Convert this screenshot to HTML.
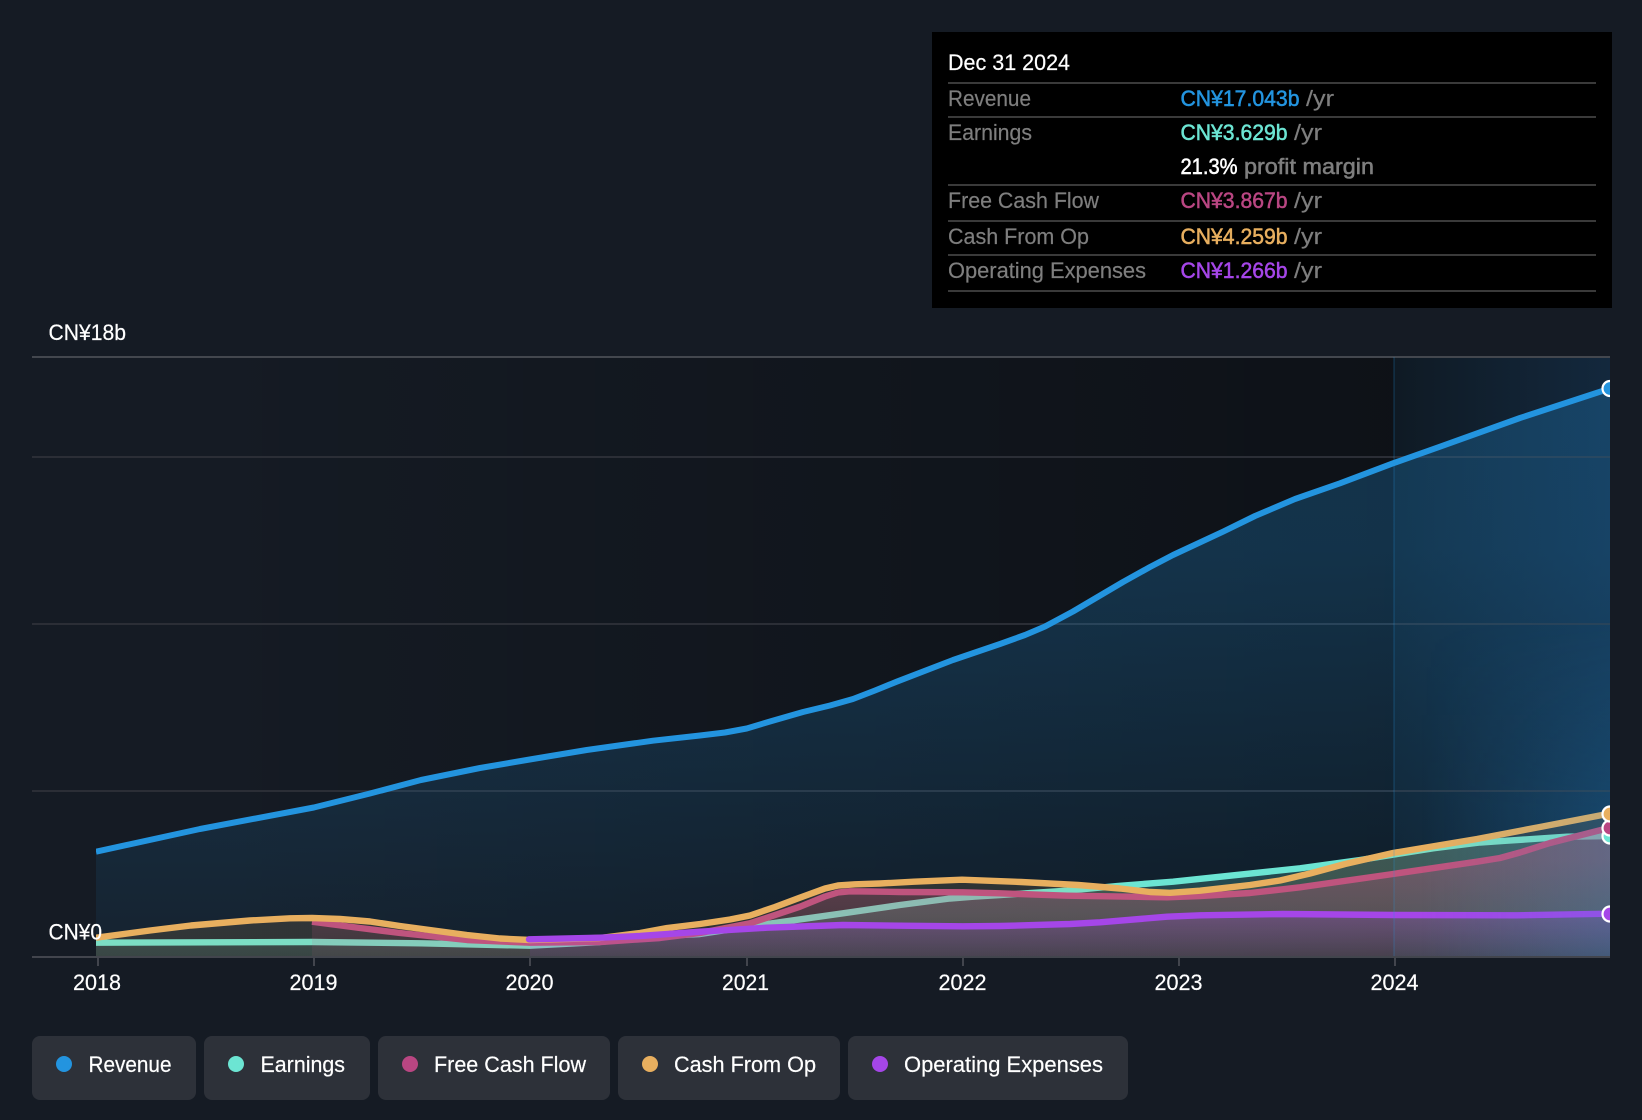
<!DOCTYPE html>
<html lang="en">
<head>
<meta charset="utf-8">
<title>Revenue and Earnings Chart</title>
<style>
html,body{margin:0;padding:0;background:#151b24;width:1642px;height:1120px;overflow:hidden}
svg{display:block}
text{font-family:"Liberation Sans",sans-serif;font-size:22.4px;fill:#fff;stroke:#fff;stroke-width:.2px}
.g{fill:#7e7e7e;stroke:#7e7e7e}
.m{stroke-width:.55px}
.ln{fill:none;stroke-width:6.4;stroke-linejoin:round}
</style>
</head>
<body>
<svg width="1642" height="1120" viewBox="0 0 1642 1120" xmlns="http://www.w3.org/2000/svg">
<defs>
<clipPath id="c"><rect x="96" y="340" width="1514" height="617"/></clipPath>
<clipPath id="m"><rect x="1590" y="360" width="20" height="597"/></clipPath>
<linearGradient id="shade" gradientUnits="userSpaceOnUse" x1="200" y1="0" x2="1394" y2="0"><stop offset="0" stop-color="#000" stop-opacity="0"/><stop offset="1" stop-color="#000" stop-opacity=".36"/></linearGradient>
<linearGradient id="fut" gradientUnits="userSpaceOnUse" x1="1394" y1="0" x2="1610" y2="0"><stop offset="0" stop-color="#0f1a24"/><stop offset="1" stop-color="#13283d"/></linearGradient>
<linearGradient id="over" gradientUnits="userSpaceOnUse" x1="1420" y1="0" x2="1610" y2="0"><stop offset="0" stop-color="#2394df" stop-opacity="0"/><stop offset="1" stop-color="#2394df" stop-opacity=".17"/></linearGradient>
<linearGradient id="vm" gradientUnits="userSpaceOnUse" x1="0" y1="620" x2="0" y2="810"><stop offset="0" stop-color="#000"/><stop offset="1" stop-color="#fff"/></linearGradient>
<mask id="ovm" maskUnits="userSpaceOnUse" x="1394" y="357" width="216" height="600"><rect x="1394" y="357" width="216" height="600" fill="url(#vm)"/></mask>
<linearGradient id="fr" gradientUnits="userSpaceOnUse" x1="0" y1="357" x2="0" y2="957"><stop offset="0" stop-color="#2394df" stop-opacity=".26"/><stop offset=".32" stop-color="#2394df" stop-opacity=".25"/><stop offset=".57" stop-color="#2394df" stop-opacity=".18"/><stop offset=".82" stop-color="#2394df" stop-opacity=".11"/><stop offset="1" stop-color="#2394df" stop-opacity=".06"/></linearGradient>
<linearGradient id="fe" gradientUnits="userSpaceOnUse" x1="0" y1="840" x2="0" y2="957"><stop offset="0" stop-color="#6ce5d3" stop-opacity=".22"/><stop offset=".64" stop-color="#6ce5d3" stop-opacity=".2"/><stop offset="1" stop-color="#6ce5d3" stop-opacity=".1"/></linearGradient>
<linearGradient id="ff" gradientUnits="userSpaceOnUse" x1="0" y1="860" x2="0" y2="957"><stop offset="0" stop-color="#b94682" stop-opacity=".38"/><stop offset="1" stop-color="#b94682" stop-opacity=".08"/></linearGradient>
<linearGradient id="fo" gradientUnits="userSpaceOnUse" x1="0" y1="810" x2="0" y2="957"><stop offset="0" stop-color="#e8af5f" stop-opacity=".13"/><stop offset="1" stop-color="#e8af5f" stop-opacity=".13"/></linearGradient>
<linearGradient id="fp" gradientUnits="userSpaceOnUse" x1="0" y1="915" x2="0" y2="957"><stop offset="0" stop-color="#a546e8" stop-opacity=".22"/><stop offset="1" stop-color="#a546e8" stop-opacity=".08"/></linearGradient>
</defs>

<!-- backgrounds -->
<rect x="96" y="357" width="1298" height="600" fill="url(#shade)"/>
<rect x="1394" y="357" width="216" height="600" fill="url(#fut)"/>

<!-- grid -->
<rect x="32" y="356" width="1578" height="2" fill="#43474e"/>
<rect x="32" y="456" width="1578" height="2" fill="#2b2e36"/>
<rect x="32" y="623" width="1578" height="2" fill="#2b2e36"/>
<rect x="32" y="790" width="1578" height="2" fill="#2b2e36"/>

<g clip-path="url(#c)">
<!-- revenue -->
<polygon fill="url(#fr)" points="96,957 96,851.7 200,829 313.8,807.5 370,793.5 421,780 480,768 529.7,759.5 586.7,750 653,740.7 700,735.5 725,732.5 746.7,728.5 770,721.5 803,712 830,705.5 853,699 875,690.5 896.7,681.7 953,660 1000,644 1025,635 1045,626.5 1073,611.5 1123,582 1150,567 1173,555 1223,531.7 1255,516 1275,507.5 1295,499 1340,483.3 1393,463.3 1440,446.7 1520,418 1610,388.5 1610,957"/>
<polyline class="ln" style="stroke-width:6" stroke="#2394df" points="96,851.7 200,829 313.8,807.5 370,793.5 421,780 480,768 529.7,759.5 586.7,750 653,740.7 700,735.5 725,732.5 746.7,728.5 770,721.5 803,712 830,705.5 853,699 875,690.5 896.7,681.7 953,660 1000,644 1025,635 1045,626.5 1073,611.5 1123,582 1150,567 1173,555 1223,531.7 1255,516 1275,507.5 1295,499 1340,483.3 1393,463.3 1440,446.7 1520,418 1610,388.5"/>
<!-- earnings -->
<polygon fill="url(#fe)" points="96,957 96,942.7 312,942 421,943.3 530,945.7 600,942 660,936 700,934 760,925 843,913.3 900,905 950,898.5 975,896.5 1000,895 1067,890.7 1117,886 1173,881.7 1300,868.3 1360,860 1433,848.3 1480,842.5 1507,840.7 1567,836.7 1610,836 1610,957"/>
<polyline class="ln" stroke="#6ce5d3" points="96,942.7 312,942 421,943.3 530,945.7 600,942 660,936 700,934 760,925 843,913.3 900,905 950,898.5 975,896.5 1000,895 1067,890.7 1117,886 1173,881.7 1300,868.3 1360,860 1433,848.3 1480,842.5 1507,840.7 1567,836.7 1610,836"/>
<!-- fcf -->
<polygon fill="url(#ff)" points="312,957 312,921.7 360,928 400,933 467,940 530,942.7 600,942 660,938 700,933 750,923.3 800,906.7 825,896.5 838,892.5 850,891.3 870,891.5 900,892 963,892.3 1000,893.3 1067,895.7 1133,896.7 1167,897.3 1200,896 1250,893 1300,887.3 1393,874 1477,861.7 1500,858 1520,852.5 1550,843 1610,827.7 1610,957"/>
<polyline class="ln" stroke="#b94682" points="312,921.7 360,928 400,933 467,940 530,942.7 600,942 660,938 700,933 750,923.3 800,906.7 825,896.5 838,892.5 850,891.3 870,891.5 900,892 963,892.3 1000,893.3 1067,895.7 1133,896.7 1167,897.3 1200,896 1250,893 1300,887.3 1393,874 1477,861.7 1500,858 1520,852.5 1550,843 1610,827.7"/>
<!-- cash from op -->
<polygon fill="url(#fo)" points="96,957 96,937.7 150,930.5 191,925.5 250,920.5 290,918.3 312,918 340,919 370,921.5 400,926 467,935 500,938.5 530,940 600,938 640,933 667,928 700,924 730,919.5 750,915.5 775,907 799,898 825,888.5 838,885.5 855,884.3 880,883.5 914,881.7 962,879.7 1021,882 1078,885 1120,888.5 1150,892 1170,892.8 1200,890.7 1250,885 1280,880.5 1310,873.5 1345,864 1393,853 1477,839 1540,827 1610,813.5 1610,957"/>
<polyline class="ln" stroke="#e8af5f" points="96,937.7 150,930.5 191,925.5 250,920.5 290,918.3 312,918 340,919 370,921.5 400,926 467,935 500,938.5 530,940 600,938 640,933 667,928 700,924 730,919.5 750,915.5 775,907 799,898 825,888.5 838,885.5 855,884.3 880,883.5 914,881.7 962,879.7 1021,882 1078,885 1120,888.5 1150,892 1170,892.8 1200,890.7 1250,885 1280,880.5 1310,873.5 1345,864 1393,853 1477,839 1540,827 1610,813.5"/>
<!-- opex -->
<polygon fill="url(#fp)" points="530,957 530,939.3 600,937.7 640,936 700,931.7 767,927.7 843,925 900,925.7 963,926.3 1000,926 1070,924 1100,922.3 1167,916.7 1200,915.3 1283,914 1395,915 1517,915.3 1610,913.7 1610,957"/>
<polyline class="ln" stroke="#a546e8" stroke-linecap="round" points="529,939.3 600,937.7 640,936 700,931.7 767,927.7 843,925 900,925.7 963,926.3 1000,926 1070,924 1100,922.3 1167,916.7 1200,915.3 1283,914 1395,915 1517,915.3 1610,913.7"/>
<!-- right overlay -->
<rect x="1420" y="357" width="190" height="600" fill="url(#over)" mask="url(#ovm)"/>
<rect x="1393" y="357" width="2" height="600" fill="#2394df" fill-opacity=".16"/>
</g>

<!-- markers -->
<g clip-path="url(#m)" stroke="#fff" stroke-width="2.2">
<circle cx="1610" cy="388.5" r="7.5" fill="#2394df"/>
<circle cx="1610" cy="836" r="7.5" fill="#6ce5d3"/>
<circle cx="1610" cy="828" r="7.5" fill="#b94682"/>
<circle cx="1610" cy="814" r="7.5" fill="#e8af5f"/>
<circle cx="1610" cy="914" r="7.5" fill="#a546e8"/>
</g>

<!-- axis -->
<rect x="32" y="956" width="1578" height="2" fill="#42454d"/>
<g fill="#42454d">
<rect x="97" y="958" width="2" height="8"/><rect x="313" y="958" width="2" height="8"/><rect x="529" y="958" width="2" height="8"/><rect x="746" y="958" width="2" height="8"/><rect x="962" y="958" width="2" height="8"/><rect x="1178" y="958" width="2" height="8"/><rect x="1394" y="958" width="2" height="8"/>
</g>

<!-- axis labels -->
<text x="48.5" y="340" textLength="77.5" lengthAdjust="spacingAndGlyphs">CN¥18b</text>
<text x="48.5" y="939.5" textLength="53.5" lengthAdjust="spacingAndGlyphs">CN¥0</text>
<g>
<text x="73" y="990" textLength="48" lengthAdjust="spacingAndGlyphs">2018</text>
<text x="289.5" y="990" textLength="48" lengthAdjust="spacingAndGlyphs">2019</text>
<text x="505.5" y="990" textLength="48" lengthAdjust="spacingAndGlyphs">2020</text>
<text x="722" y="990" textLength="47" lengthAdjust="spacingAndGlyphs">2021</text>
<text x="938.5" y="990" textLength="48" lengthAdjust="spacingAndGlyphs">2022</text>
<text x="1154.5" y="990" textLength="48" lengthAdjust="spacingAndGlyphs">2023</text>
<text x="1370.5" y="990" textLength="48" lengthAdjust="spacingAndGlyphs">2024</text>
</g>

<!-- tooltip panel -->
<rect x="932" y="32" width="680" height="276" fill="#000"/>
<g fill="#3a3a3a">
<rect x="948" y="82" width="648" height="2"/><rect x="948" y="116" width="648" height="2"/><rect x="948" y="184" width="648" height="2"/><rect x="948" y="220" width="648" height="2"/><rect x="948" y="254" width="648" height="2"/><rect x="948" y="290" width="648" height="2"/>
</g>
<text x="948" y="70" textLength="122" lengthAdjust="spacingAndGlyphs">Dec 31 2024</text>
<text class="g" x="948" y="106" textLength="83" lengthAdjust="spacingAndGlyphs">Revenue</text>
<text class="g" x="948" y="140" textLength="84" lengthAdjust="spacingAndGlyphs">Earnings</text>
<text class="g" x="948" y="208" textLength="151" lengthAdjust="spacingAndGlyphs">Free Cash Flow</text>
<text class="g" x="948" y="244" textLength="141" lengthAdjust="spacingAndGlyphs">Cash From Op</text>
<text class="g" x="948" y="278" textLength="198" lengthAdjust="spacingAndGlyphs">Operating Expenses</text>

<text class="m" x="1180.5" y="106" textLength="119" lengthAdjust="spacingAndGlyphs" style="fill:#2394df;stroke:#2394df">CN¥17.043b</text>
<text class="g" x="1306" y="106" textLength="28" lengthAdjust="spacingAndGlyphs">/yr</text>
<text class="m" x="1180.5" y="140" textLength="107" lengthAdjust="spacingAndGlyphs" style="fill:#6ce5d3;stroke:#6ce5d3">CN¥3.629b</text>
<text class="g" x="1294" y="140" textLength="28" lengthAdjust="spacingAndGlyphs">/yr</text>
<text class="m" x="1180.5" y="174" textLength="57" lengthAdjust="spacingAndGlyphs" style="fill:#fff;stroke:#fff">21.3%</text>
<text class="g m" x="1244" y="174" textLength="130" lengthAdjust="spacingAndGlyphs">profit margin</text>
<text class="m" x="1180.5" y="208" textLength="107" lengthAdjust="spacingAndGlyphs" style="fill:#b94682;stroke:#b94682">CN¥3.867b</text>
<text class="g" x="1294" y="208" textLength="28" lengthAdjust="spacingAndGlyphs">/yr</text>
<text class="m" x="1180.5" y="244" textLength="107" lengthAdjust="spacingAndGlyphs" style="fill:#e8af5f;stroke:#e8af5f">CN¥4.259b</text>
<text class="g" x="1294" y="244" textLength="28" lengthAdjust="spacingAndGlyphs">/yr</text>
<text class="m" x="1180.5" y="278" textLength="107" lengthAdjust="spacingAndGlyphs" style="fill:#a546e8;stroke:#a546e8">CN¥1.266b</text>
<text class="g" x="1294" y="278" textLength="28" lengthAdjust="spacingAndGlyphs">/yr</text>

<!-- legend -->
<g fill="#2d3139">
<rect x="32" y="1036" width="164" height="64" rx="8"/>
<rect x="204" y="1036" width="166" height="64" rx="8"/>
<rect x="378" y="1036" width="232" height="64" rx="8"/>
<rect x="618" y="1036" width="222" height="64" rx="8"/>
<rect x="848" y="1036" width="280" height="64" rx="8"/>
</g>
<circle cx="64" cy="1064" r="8" fill="#2394df"/>
<circle cx="236" cy="1064" r="8" fill="#6ce5d3"/>
<circle cx="410" cy="1064" r="8" fill="#b94682"/>
<circle cx="650" cy="1064" r="8" fill="#e8af5f"/>
<circle cx="880" cy="1064" r="8" fill="#a546e8"/>
<text x="88.5" y="1072" textLength="83" lengthAdjust="spacingAndGlyphs">Revenue</text>
<text x="260.5" y="1072" textLength="84.5" lengthAdjust="spacingAndGlyphs">Earnings</text>
<text x="434" y="1072" textLength="152" lengthAdjust="spacingAndGlyphs">Free Cash Flow</text>
<text x="674" y="1072" textLength="142" lengthAdjust="spacingAndGlyphs">Cash From Op</text>
<text x="904" y="1072" textLength="199" lengthAdjust="spacingAndGlyphs">Operating Expenses</text>
</svg>
</body>
</html>
